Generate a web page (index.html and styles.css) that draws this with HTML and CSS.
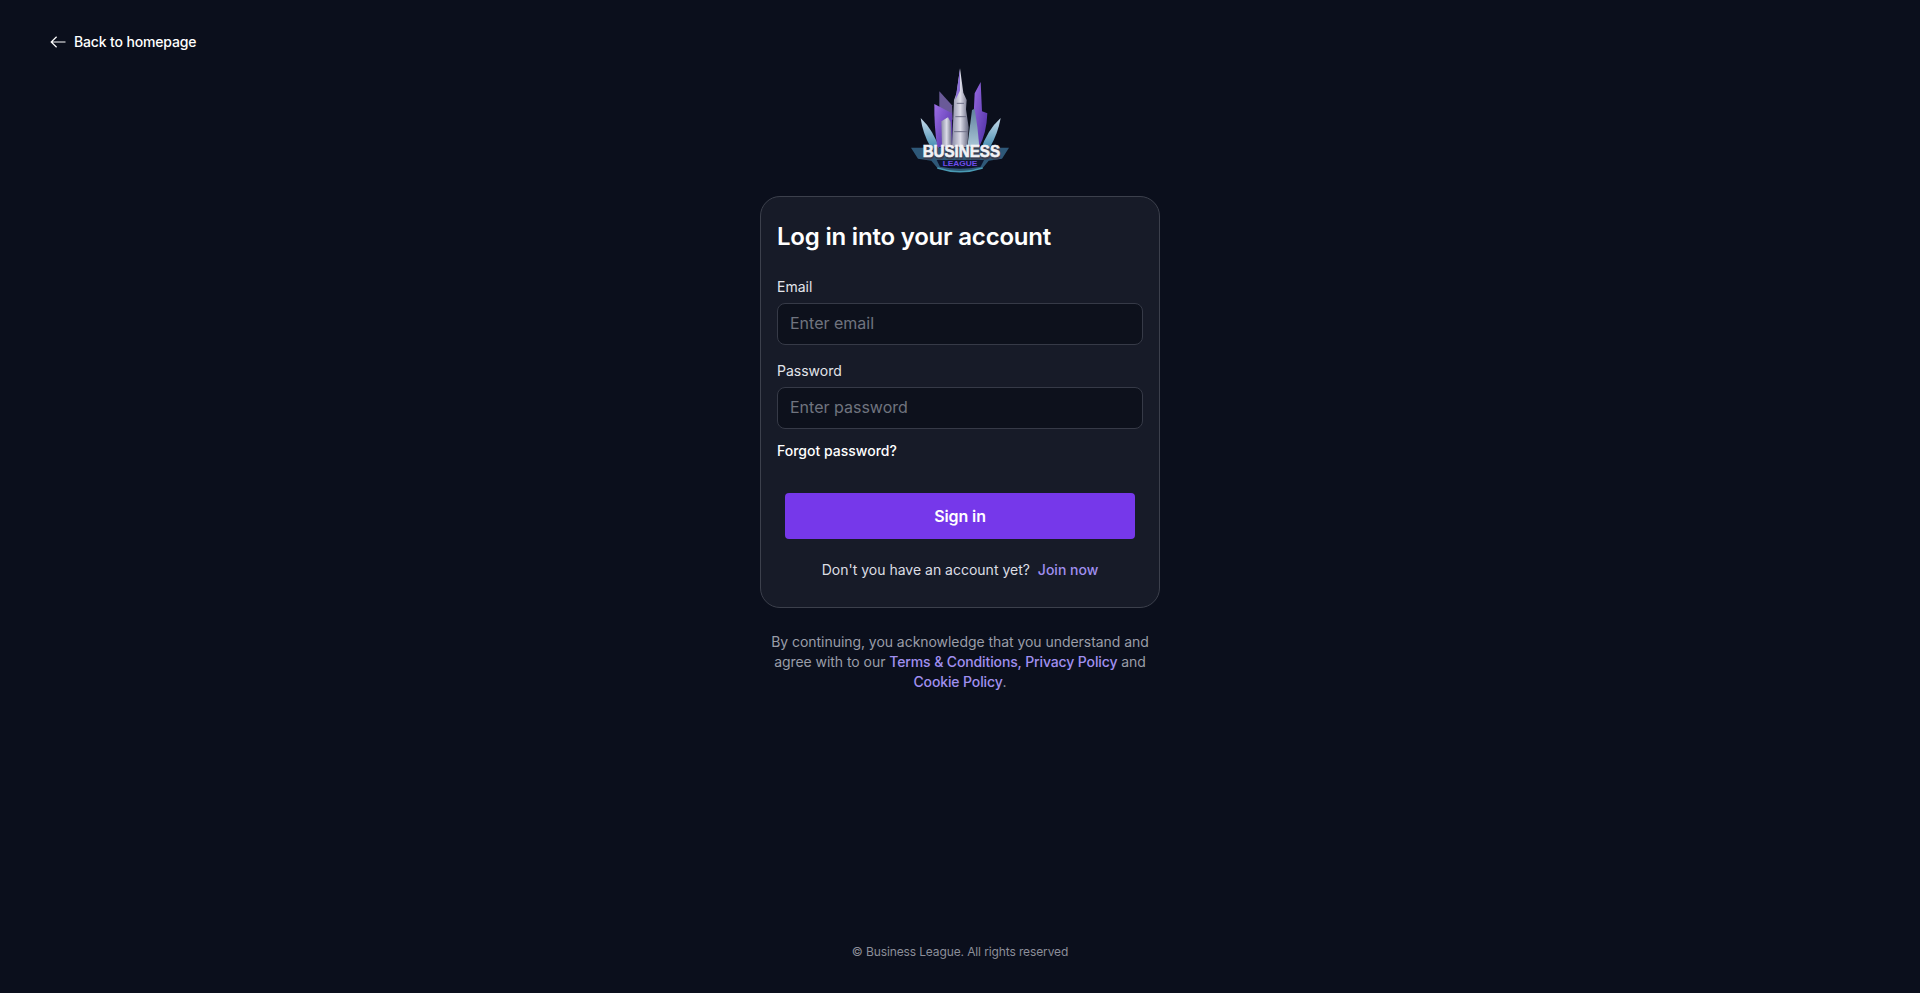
FILE: index.html
```html
<!DOCTYPE html>
<html lang="en">
<head>
    <meta charset="UTF-8">
    <meta name="viewport" content="width=device-width, initial-scale=1.0">
    <title>Business League - Log in</title>
    <link rel="stylesheet" href="styles.css">
</head>
<body>
    <div class="page">
        <header class="topbar">
            <a class="back-link" href="#">
                <svg class="back-icon" viewBox="0 0 16 12" aria-hidden="true">
                    <path d="M15.5 6H1.2M6.6 .7L1.2 6l5.4 5.3"/>
                </svg>
                Back to homepage
            </a>
        </header>

        <main class="content">
            <svg class="logo" viewBox="0 12 480 378" role="img" aria-label="Business League">
                <defs>
                    <linearGradient id="silver" x1="0" y1="0" x2="1" y2="0">
                        <stop offset="0" stop-color="#8d8fa8"/>
                        <stop offset="0.5" stop-color="#dcdce8"/>
                        <stop offset="1" stop-color="#65677f"/>
                    </linearGradient>
                    <linearGradient id="purple" x1="0" y1="0" x2="1" y2="1">
                        <stop offset="0" stop-color="#9d6ee6"/>
                        <stop offset="1" stop-color="#4a2ca0"/>
                    </linearGradient>
                    <linearGradient id="leaf" x1="0" y1="0" x2="0" y2="1">
                        <stop offset="0" stop-color="#c9dcec"/>
                        <stop offset="1" stop-color="#3a87ac"/>
                    </linearGradient>
                    <linearGradient id="teal" x1="0" y1="0" x2="0" y2="1">
                        <stop offset="0" stop-color="#5f7f9c"/>
                        <stop offset="1" stop-color="#a9c6d6"/>
                    </linearGradient>
                    <filter id="soft"><feGaussianBlur stdDeviation="1"/></filter>
                </defs>
                <g filter="url(#soft)">
                    <path d="M122 204Q160 240 180 300L152 292Q128 250 122 204Z" fill="url(#leaf)"/>
                    <path d="M362 204Q322 240 302 300L330 292Q354 250 362 204Z" fill="url(#leaf)"/>
                    <path d="M178 124L216 166L218 210L178 172Z" fill="#6a5a98"/>
                    <path d="M163 162L216 190L218 292L172 292Q162 230 163 162Z" fill="url(#purple)"/>
                    <path d="M302 96L306 184L322 190Q320 250 296 294L276 294L284 130Z" fill="url(#purple)"/>
                    <path d="M184 214L204 202L212 216L216 290L186 290Z" fill="url(#silver)"/>
                    <path d="M276 180L284 176L292 230L298 290L262 290Z" fill="url(#teal)"/>
                    <path d="M240 55L250 128L260 150L258 178L266 232L262 292L216 292L220 200L222 150L230 128Z" fill="url(#silver)"/>
                    <path d="M240 58L226 150L240 122Z" fill="#8c6fd8"/>
                    <path d="M230 160H252M226 200H258M222 245H264" stroke="#6f7088" stroke-width="3" fill="none"/>
                    <path d="M93 293H387L366 326L326 332L308 354Q240 370 172 354L154 332L114 326Z" fill="#2e5878"/>
                    <path d="M170 330H312L302 350Q240 362 180 350Z" fill="#10162e"/>
                    <path d="M172 354Q240 376 308 354" fill="none" stroke="#4a9ab4" stroke-width="5"/>
                </g>
                <text class="logo-shadow" x="130" y="326" textLength="232" lengthAdjust="spacingAndGlyphs">BUSINESS</text>
                <text class="logo-title" x="128" y="322" textLength="232" lengthAdjust="spacingAndGlyphs">BUSINESS</text>
                <text class="logo-sub" x="188" y="349" textLength="104" lengthAdjust="spacingAndGlyphs">LEAGUE</text>
            </svg>

            <section class="card">
                <h1>Log in into your account</h1>
                <form class="login-form">
                    <div class="form-group">
                        <label for="email">Email</label>
                        <input type="email" id="email" name="email" placeholder="Enter email">
                    </div>
                    <div class="form-group">
                        <label for="password">Password</label>
                        <input type="password" id="password" name="password" placeholder="Enter password">
                    </div>
                    <a class="forgot-link" href="#">Forgot password?</a>
                    <button type="submit">Sign in</button>
                </form>
                <p class="join-row">Don't you have an account yet? <a href="#">Join now</a></p>
            </section>

            <p class="legal">By continuing, you acknowledge that you understand and agree with to our <a href="#">Terms &amp; Conditions, Privacy Policy</a> and <a href="#">Cookie Policy</a>.</p>
        </main>

        <footer class="footer">© Business League. All rights reserved</footer>
    </div>
</body>
</html>
```

FILE: styles.css
```css
/* Global */
* {
    box-sizing: border-box;
}

body {
    font-family: 'Inter', 'Noto Sans', sans-serif;
    background-color: #0b0f1c;
    color: #fff;
    margin: 0;
}

a {
    text-decoration: none;
}

.page {
    display: flex;
    flex-direction: column;
    min-height: 100vh;
}

/* Top bar */
.topbar {
    height: 54px;
    padding: 30px 0 0 50px;
}

.back-link {
    display: inline-flex;
    align-items: center;
    gap: 8px;
    color: #fff;
    font-size: 14px;
    font-weight: 500;
    letter-spacing: -0.15px;
    line-height: 24px;
}

.back-icon {
    width: 16px;
    height: 12px;
    fill: none;
    stroke: #fff;
    stroke-width: 1.2;
}

/* Main column */
.content {
    display: flex;
    flex-direction: column;
    align-items: center;
    flex: 1;
}

.logo {
    width: 160px;
    height: 126px;
    display: block;
}

.logo-title,
.logo-shadow,
.logo-sub {
    font-family: 'Liberation Sans', sans-serif;
    font-weight: 700;
}

.logo-title {
    font-size: 52px;
    fill: #f2f2f6;
    stroke: #f2f2f6;
    stroke-width: 2;
}

.logo-shadow {
    font-size: 52px;
    fill: #3b3f50;
    stroke: #3b3f50;
    stroke-width: 3;
}

.logo-sub {
    font-size: 24px;
    fill: #6f4cea;
}

/* Card */
.card {
    width: 400px;
    height: 412px;
    margin-top: 16px;
    padding: 24px 16px 0;
    background-color: #171b28;
    border: 1px solid #3c404c;
    border-radius: 20px;
}

h1 {
    margin: 0;
    font-size: 24px;
    font-weight: 600;
    letter-spacing: -0.2px;
    line-height: 32px;
    color: #fff;
}

.login-form {
    display: flex;
    flex-direction: column;
    margin-top: 24px;
}

.form-group {
    display: flex;
    flex-direction: column;
    margin-bottom: 16px;
}

label {
    font-size: 14px;
    line-height: 20px;
    color: #e2e4ea;
    margin-bottom: 6px;
}

input {
    width: 100%;
    height: 42px;
    padding: 0 12px 2px;
    font-family: inherit;
    font-size: 16px;
    color: #fff;
    background-color: #0d111c;
    border: 1px solid #363a47;
    border-radius: 8px;
}

input::placeholder {
    color: #70747f;
}

.forgot-link {
    color: #fff;
    font-size: 14px;
    font-weight: 500;
    line-height: 20px;
    margin-top: -4px;
}

button {
    align-self: center;
    width: 350px;
    height: 46px;
    margin-top: 32px;
    font-family: inherit;
    font-size: 16px;
    font-weight: 600;
    letter-spacing: -0.1px;
    color: #fff;
    background-color: #7638ea;
    border: none;
    border-radius: 4px;
    cursor: pointer;
}

.join-row {
    margin: 21px 0 0;
    text-align: center;
    font-size: 14px;
    line-height: 20px;
    color: #dcdee4;
}

.join-row a {
    margin-left: 4px;
    color: #a08ff0;
    font-weight: 500;
}

/* Below the card */
.legal {
    width: 400px;
    margin: 24px 0 0;
    text-align: center;
    font-size: 14px;
    letter-spacing: -0.05px;
    line-height: 20px;
    color: #9a9da8;
}

.legal a {
    color: #a08ff0;
    font-weight: 500;
    letter-spacing: -0.12px;
}

.footer {
    padding-bottom: 32px;
    text-align: center;
    font-size: 12px;
    letter-spacing: -0.12px;
    line-height: 18px;
    color: #8b8e99;
}
```
